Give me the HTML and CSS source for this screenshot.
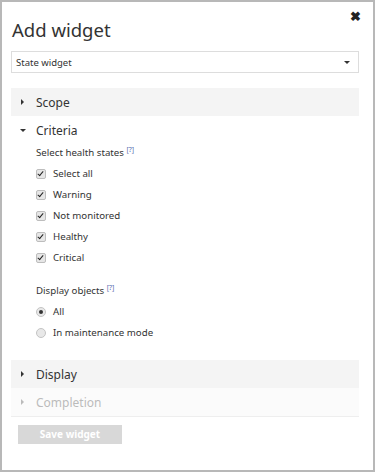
FILE: index.html
```html
<!DOCTYPE HTML>
<html lang="en">
<head>
    <meta charset="utf-8">
    <title>Add widget</title>
    <link rel="stylesheet" href="styles.css">
</head>
<body>
<div class="dialog">
    <span class="close">&#10006;</span>
    <h1 class="title">Add widget</h1>
    <div class="select">
        <span>State widget</span>
        <span class="caret"></span>
    </div>

    <div class="section closed">
        <span class="tri right"></span>Scope
    </div>

    <div class="section open">
        <span class="tri down"></span>Criteria
    </div>
    <div class="body">
        <div class="label">Select health states <sup>[?]</sup></div>
        <ul class="checks">
            <li><span class="box"></span>Select all</li>
            <li><span class="box"></span>Warning</li>
            <li><span class="box"></span>Not monitored</li>
            <li><span class="box"></span>Healthy</li>
            <li><span class="box"></span>Critical</li>
        </ul>
        <div class="label gap">Display objects <sup>[?]</sup></div>
        <ul class="radios">
            <li><span class="radio on"></span>All</li>
            <li><span class="radio"></span>In maintenance mode</li>
        </ul>
    </div>

    <div class="section closed">
        <span class="tri right"></span>Display
    </div>
    <div class="section disabled">
        <span class="tri right"></span>Completion
    </div>

    <div class="btn">Save widget</div>
</div>
</body>
</html>
```

FILE: styles.css
```css
html, body{
    margin: 0;
    padding: 0;
    background: #fff;
}
body{
    font-family: "Noto Sans", "Open Sans", sans-serif;
    color: #333;
}
ul, li{
    margin: 0;
    padding: 0;
    list-style-type: none;
}
.dialog{
    position: relative;
    box-sizing: border-box;
    width: 375px;
    height: 472px;
    margin: 0;
    border: 2px solid #b8b8b8;
    padding: 0 14px 0 9px;
}
.close{
    position: absolute;
    right: 12px;
    top: 5px;
    font-size: 13px;
    font-weight: bold;
    color: #222;
}
.title{
    margin: 0;
    padding: 14px 0 0 1px;
    height: 35px;
    font-size: 18.5px;
    font-weight: normal;
    line-height: 28px;
    color: #333;
}
.select{
    display: flex;
    align-items: center;
    justify-content: space-between;
    height: 20px;
    margin-top: 0;
    border: 1px solid #ddd;
    padding: 0 8px 0 4px;
    font-size: 9.5px;
    color: #333;
}
.caret{
    width: 0;
    height: 0;
    border-left: 3px solid transparent;
    border-right: 3px solid transparent;
    border-top: 3px solid #333;
}
.section{
    display: flex;
    align-items: center;
    height: 28px;
    font-size: 12px;
    color: #333;
}
.closed{
    background: #f4f4f4;
    margin-top: 15px;
}
.open{
    height: 29px;
}
.disabled{
    background: #fbfbfb;
    color: #bbb;
    border-bottom: 1px solid #eee;
}
.section + .section{
    margin-top: 0;
}
.tri{
    display: inline-block;
    width: 0;
    height: 0;
    margin: 0 10px 0 9px;
}
.right{
    border-top: 3px solid transparent;
    border-bottom: 3px solid transparent;
    border-left: 3px solid #333;
    margin-left: 10px;
    margin-right: 12px;
}
.down{
    border-left: 3px solid transparent;
    border-right: 3px solid transparent;
    border-top: 3px solid #333;
}
.disabled .right{
    border-left-color: #bbb;
}
.body{
    padding: 0 0 2px 25px;
    font-size: 9.7px;
}
.label{
    height: 15px;
    line-height: 15px;
    margin-bottom: 3px;
}
.label sup{
    font-size: 7px;
    color: #5a6fb0;
    vertical-align: 4px;
    line-height: 0;
}
.gap{
    margin-top: 15px;
}
.checks li, .radios li{
    display: flex;
    align-items: center;
    height: 21px;
}
.box{
    position: relative;
    box-sizing: border-box;
    width: 10px;
    height: 10px;
    margin-right: 7px;
    border: 1px solid #bdbdbd;
    border-radius: 2px;
    background: #e6e6e6;
}
.box::after{
    content: "";
    position: absolute;
    left: 2px;
    top: 0px;
    width: 2px;
    height: 5px;
    border-right: 1.5px solid #222;
    border-bottom: 1.5px solid #222;
    transform: rotate(40deg);
}
.radio{
    position: relative;
    box-sizing: border-box;
    width: 10px;
    height: 10px;
    margin-right: 7px;
    border: 1px solid #c4c4c4;
    border-radius: 50%;
    background: #e8e8e8;
}
.radio.on::after{
    content: "";
    position: absolute;
    left: 2px;
    top: 2px;
    width: 4px;
    height: 4px;
    border-radius: 50%;
    background: #333;
}
.btn{
    width: 104px;
    height: 19px;
    margin: 8px 0 0 7px;
    background: #d8d8d8;
    color: #fff;
    font-size: 10px;
    font-weight: bold;
    line-height: 19px;
    text-align: center;
}
```
